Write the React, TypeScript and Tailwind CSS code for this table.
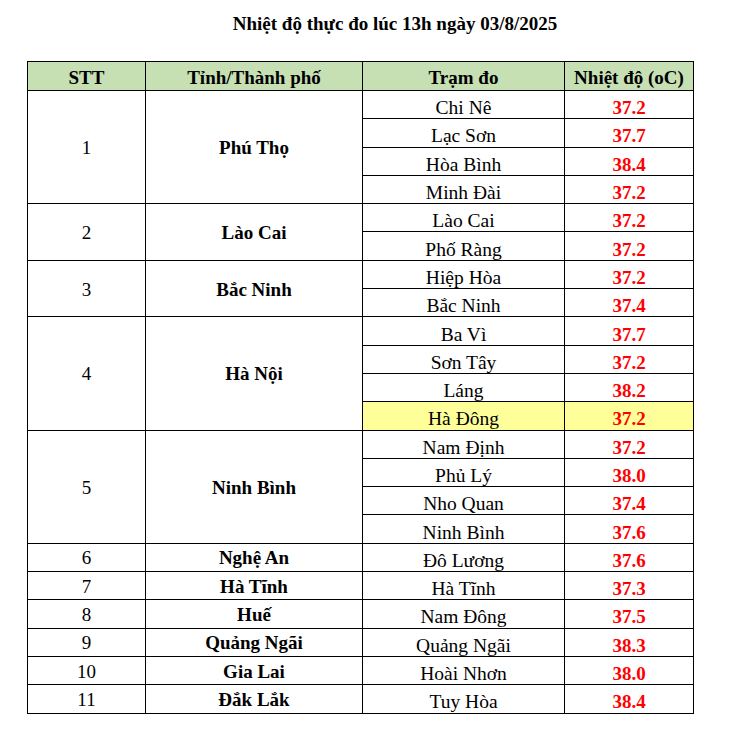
const groups: { stt: string; province: string; stations: [string, string][] }[] = [
  { stt: "1", province: "Phú Thọ", stations: [["Chi Nê", "37.2"], ["Lạc Sơn", "37.7"], ["Hòa Bình", "38.4"], ["Minh Đài", "37.2"]] },
  { stt: "2", province: "Lào Cai", stations: [["Lào Cai", "37.2"], ["Phố Ràng", "37.2"]] },
  { stt: "3", province: "Bắc Ninh", stations: [["Hiệp Hòa", "37.2"], ["Bắc Ninh", "37.4"]] },
  { stt: "4", province: "Hà Nội", stations: [["Ba Vì", "37.7"], ["Sơn Tây", "37.2"], ["Láng", "38.2"], ["Hà Đông", "37.2"]] },
  { stt: "5", province: "Ninh Bình", stations: [["Nam Định", "37.2"], ["Phủ Lý", "38.0"], ["Nho Quan", "37.4"], ["Ninh Bình", "37.6"]] },
  { stt: "6", province: "Nghệ An", stations: [["Đô Lương", "37.6"]] },
  { stt: "7", province: "Hà Tĩnh", stations: [["Hà Tĩnh", "37.3"]] },
  { stt: "8", province: "Huế", stations: [["Nam Đông", "37.5"]] },
  { stt: "9", province: "Quảng Ngãi", stations: [["Quảng Ngãi", "38.3"]] },
  { stt: "10", province: "Gia Lai", stations: [["Hoài Nhơn", "38.0"]] },
  { stt: "11", province: "Đắk Lắk", stations: [["Tuy Hòa", "38.4"]] },
];

export default function App() {
  return (
    <div className="w-[744px] h-[745px] bg-white text-black [font-family:'Liberation_Serif',serif] text-[19px]">
      <h1 className="pt-[12px] pl-[46px] text-center font-bold text-[19px] leading-[24px]">
        Nhiệt độ thực đo lúc 13h ngày 03/8/2025
      </h1>
      <table className="ml-[27px] mt-[25px] border-collapse">
        <thead>
          <tr className="h-[29px] bg-[#C6E0B4] font-bold leading-[22px]">
            <th className="w-[118px] border border-black pt-[3px]">STT</th>
            <th className="w-[217px] border border-black pt-[3px]">Tỉnh/Thành phố</th>
            <th className="w-[202px] border border-black pt-[3px]">Trạm đo</th>
            <th className="w-[129px] border border-black pt-[3px]">Nhiệt độ (oC)</th>
          </tr>
        </thead>
        <tbody>
          {groups.map((g) =>
            g.stations.map(([name, temp], i) => (
              <tr key={g.stt + name} className="h-[28.3px] leading-[20px]">
                {i === 0 && (
                  <>
                    <td rowSpan={g.stations.length} className="border border-black text-center pt-[2px]">
                      {g.stt}
                    </td>
                    <td rowSpan={g.stations.length} className="border border-black text-center font-bold pt-[2px]">
                      {g.province}
                    </td>
                  </>
                )}
                <td className={`border border-black text-center text-[19.5px] pt-[7px] ${name === "Hà Đông" ? "bg-[#FFFF99]" : ""}`}>
                  {name}
                </td>
                <td className={`border border-black text-center font-bold text-[#FF0000] pt-[7px] ${name === "Hà Đông" ? "bg-[#FFFF99]" : ""}`}>
                  {temp}
                </td>
              </tr>
            ))
          )}
        </tbody>
      </table>
    </div>
  );
}
